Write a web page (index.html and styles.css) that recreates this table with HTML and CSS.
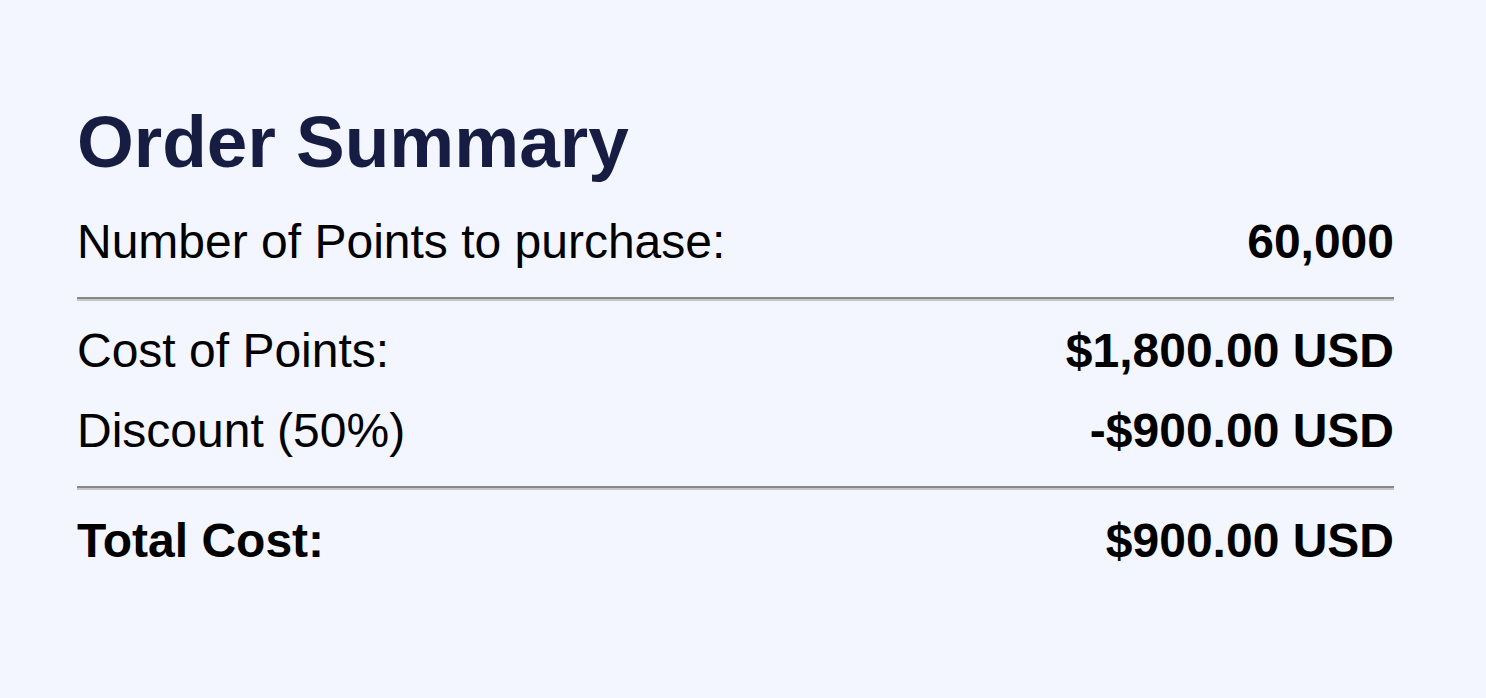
FILE: index.html
```html
<!DOCTYPE html>
<html lang="en">
<head>
<meta charset="utf-8">
<title>Order Summary</title>
<link rel="stylesheet" href="styles.css">
</head>
<body>
<main class="summary">
  <h1 class="title">Order Summary</h1>
  <div class="row">
    <span class="label">Number of Points to purchase:</span>
    <span class="value">60,000</span>
  </div>
  <hr class="divider">
  <div class="row">
    <span class="label">Cost of Points:</span>
    <span class="value">$1,800.00 USD</span>
  </div>
  <div class="row">
    <span class="label">Discount (50%)</span>
    <span class="value">-$900.00 USD</span>
  </div>
  <hr class="divider divider-total">
  <div class="row">
    <span class="label label-bold">Total Cost:</span>
    <span class="value">$900.00 USD</span>
  </div>
</main>
</body>
</html>
```

FILE: styles.css
```css
html, body {
  margin: 0;
  padding: 0;
}

body {
  background: #f3f6fe;
  font-family: "Liberation Sans", Arial, Helvetica, sans-serif;
  color: #000;
  width: 1486px;
  height: 698px;
  overflow: hidden;
}

.summary {
  box-sizing: border-box;
  padding: 102px 0 0 77px;
  width: 1394px;
}

.title {
  margin: 0 0 20px 0;
  font-size: 73px;
  line-height: 80px;
  font-weight: 700;
  color: #161c42;
}

.row {
  display: flex;
  justify-content: space-between;
  align-items: baseline;
  font-size: 48px;
  line-height: 80px;
  height: 80px;
}

.label {
  font-weight: 400;
}

.label-bold {
  font-weight: 700;
}

.value {
  font-weight: 700;
}

.divider {
  margin: 15px 0 10px 0;
  height: 0;
  border: 0;
  border-top: 2px solid #878787;
  border-bottom: 2px solid #c6c6c6;
}

.divider-total {
  margin-bottom: 11px;
}
```
